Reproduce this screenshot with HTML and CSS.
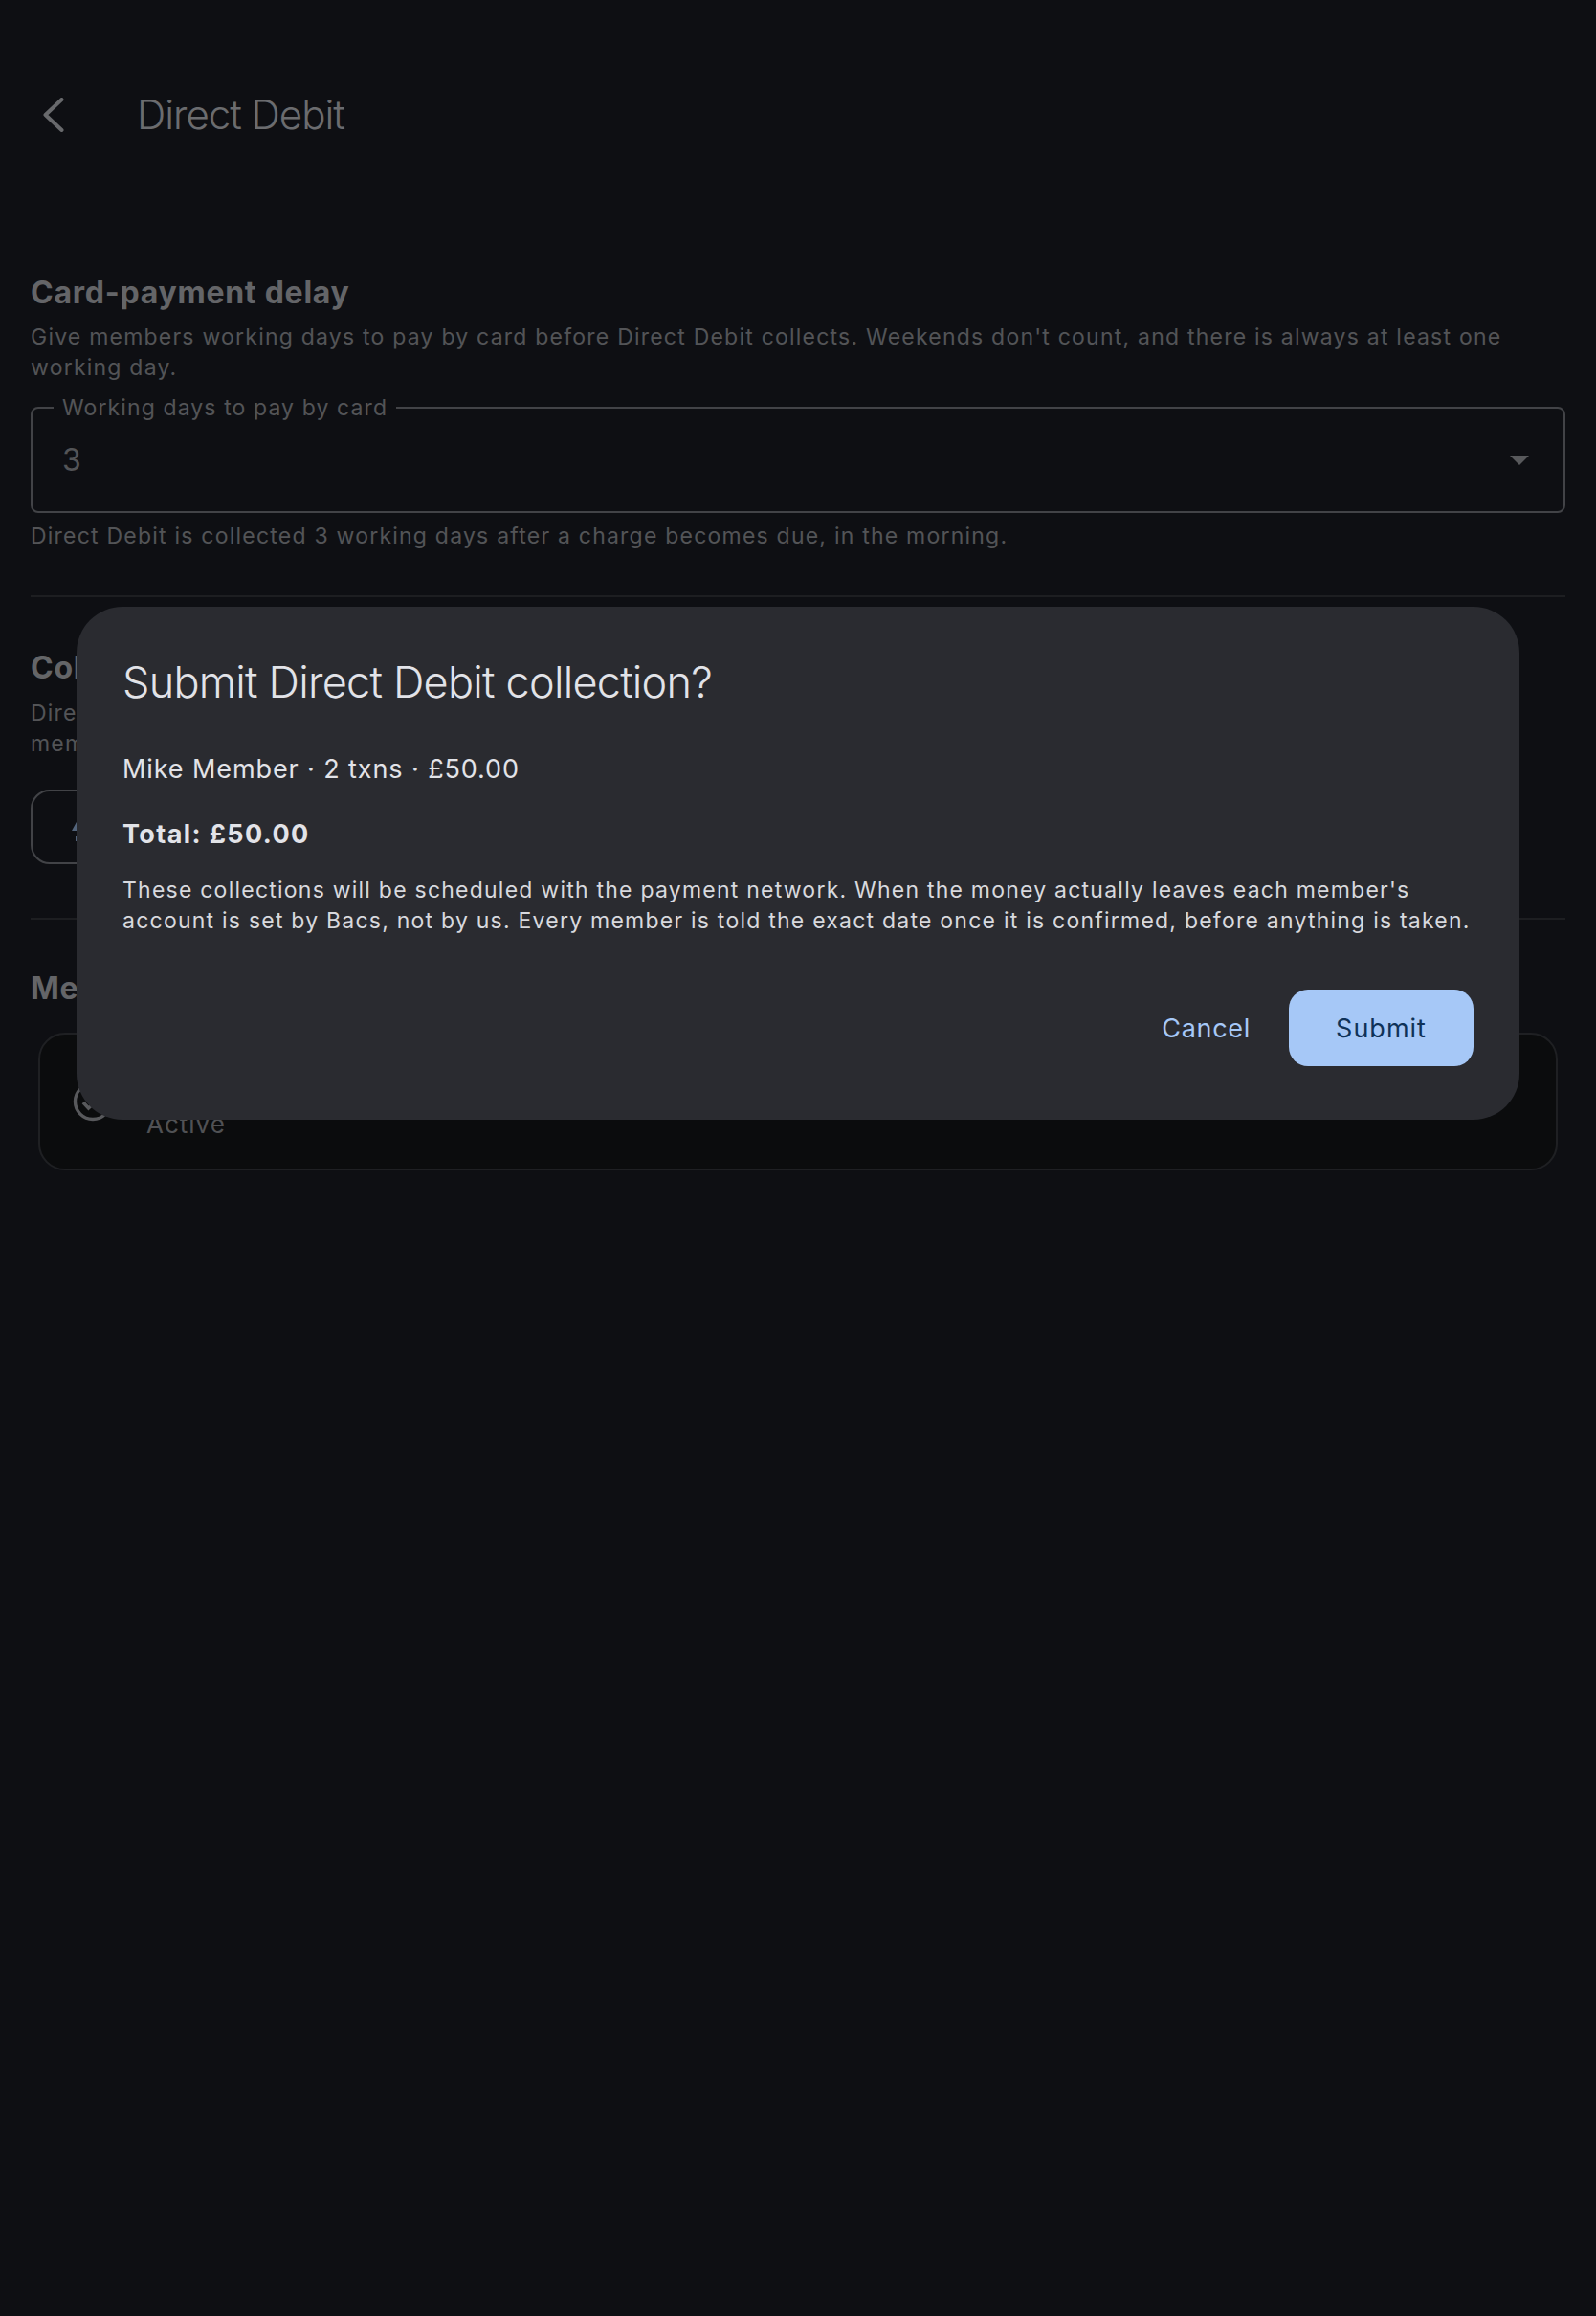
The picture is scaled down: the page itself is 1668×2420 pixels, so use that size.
FILE: index.html
```html
<!DOCTYPE html>
<html lang="en">
<head>
<meta charset="utf-8">
<title>Direct Debit</title>
<link rel="stylesheet" href="styles.css">
</head>
<body>
<div class="page">
  <header class="topbar">
    <button class="back" aria-label="Back">
      <svg viewBox="0 0 48 36" width="48" height="36"><path d="M24.500 2 7.500 18l17 16" fill="none" stroke="currentColor" stroke-width="4" stroke-linecap="round" stroke-linejoin="round"/></svg>
    </button>
    <h1 class="title">Direct Debit</h1>
  </header>
  <main class="content">
    <section class="section first">
      <h2 class="heading">Card-payment delay</h2>
      <p class="desc">Give members working days to pay by card before Direct Debit collects. Weekends don't count, and there is always at least one working day.</p>
      <fieldset class="select">
        <legend>Working days to pay by card</legend>
        <span class="value">3</span>
        <svg class="caret" viewBox="0 0 20 10" width="20" height="10"><path d="M0 0h20L10 10z" fill="currentColor"/></svg>
      </fieldset>
      <p class="help">Direct Debit is collected 3 working days after a charge becomes due, in the morning.</p>
    </section>
    <section class="section middle">
      <h2 class="heading">Collections</h2>
      <p class="desc">Direct Debit collections are submitted to the payment network for each member with money due. Review the<br>members listed below before you submit them.</p>
      <button class="outline">
        <svg class="upload" viewBox="0 0 24 36" width="24" height="36"><path d="M1 22 12 2l11 20zM5 28h14v5H5z" fill="currentColor"/></svg>
        <span>Submit</span>
      </button>
    </section>
    <section class="section last">
      <h2 class="heading">Members</h2>
      <div class="card">
        <svg class="check" viewBox="0 0 48 48" width="48" height="48"><circle cx="24" cy="24" r="18.500" fill="none" stroke="currentColor" stroke-width="3.400"/><path d="m14 25 5.500 6L34 17" fill="none" stroke="currentColor" stroke-width="3.600"/></svg>
        <div class="card-text">
          <div class="card-name">Mike Member</div>
          <div class="card-status">Active</div>
        </div>
      </div>
    </section>
  </main>
</div>
<div class="scrim"></div>
<div class="dialog" role="dialog">
  <h2 class="dialog-title">Submit Direct Debit collection?</h2>
  <p class="dialog-line">Mike Member · 2 txns · £50.00</p>
  <p class="dialog-total">Total: £50.00</p>
  <p class="dialog-note">These collections will be scheduled with the payment network. When the money actually leaves each member's account is set by Bacs, not by us. Every member is told the exact date once it is confirmed, before anything is taken.</p>
  <div class="actions">
    <button class="text-btn">Cancel</button>
    <button class="fill-btn">Submit</button>
  </div>
</div>
</body>
</html>
```

FILE: styles.css
```css
* { box-sizing: border-box; }
html, body { margin: 0; padding: 0; }
body {
  width: 1668px;
  height: 2420px;
  background: #1c1f27;
  color: #e2e3e8;
  font-family: Inter, "Liberation Sans", sans-serif;
  overflow: hidden;
}
button { font-family: inherit; }
.page { padding: 0 32px; }
.topbar {
  height: 240px;
  padding-top: 90px;
  display: flex;
  align-items: flex-start;
}
.back {
  width: 48px;
  height: 60px;
  margin-left: 8px;
  padding: 0;
  border: 0;
  background: none;
  color: #d0d2d8;
  display: flex;
  align-items: center;
}
.title {
  margin: 0 0 0 55px;
  font-size: 42px;
  line-height: 60px;
  font-weight: 300;
  letter-spacing: -1px;
  color: #d6d8de;
}
.section { border-top: 2px solid #3a3c42; padding: 53.500px 0 56px; }
.section.first { border-top: 0; padding-top: 45.500px; padding-bottom: 46px; }
.section.last { padding-top: 52px; padding-bottom: 0; }
.heading {
  margin: 0;
  font-size: 32px;
  line-height: 40px;
  font-weight: 700;
  letter-spacing: 0.75px;
  color: #c8cad0;
}
.desc, .help {
  margin: 0;
  font-size: 23px;
  line-height: 32px;
  letter-spacing: 1.220px;
  color: #a6a8ae;
}
.desc { margin-top: 10.500px; }
.middle .desc { margin-top: 11.500px; }
.select {
  margin: 14px 0 0;
  padding: 0 30px;
  height: 122px;
  border: 2px solid #85878e;
  border-radius: 8px;
  display: flex;
  align-items: center;
  justify-content: space-between;
}
.select legend {
  padding: 0 9px;
  margin-left: -8px;
  font-size: 23px;
  line-height: 24px;
  letter-spacing: 1.100px;
  color: #a6a8ae;
}
.value { font-size: 32px; color: #a6a8ae; margin-top: -11px; margin-left: 1px; }
.caret { color: #b0b2b8; margin-top: -10px; margin-right: 6px; }
.help { margin-top: 8px; }
.outline {
  display: flex;
  align-items: center;
  gap: 12px;
  margin-top: 32px;
  width: 500px;
  height: 78px;
  border: 2px solid #85878e;
  border-radius: 20px;
  background: none;
  padding: 0 0 0 40px;
  font-size: 27px;
  color: #a6c8f7;
}
.upload { flex: none; }
.card {
  margin: 26px 8px 0;
  height: 144px;
  border: 2px solid #3e4046;
  border-radius: 28px;
  background: #16181b;
  display: flex;
  align-items: center;
  padding: 0 31px;
  gap: 32px;
}
.check { color: #b0b2b8; flex: none; }
.card-name { font-size: 28px; line-height: 40px; color: #d0d2d8; }
.card-status { font-size: 26px; line-height: 36px; letter-spacing: 1px; color: #a0a2a8; margin-top: 8px; }
.scrim {
  position: fixed;
  inset: 0;
  background: rgba(0, 0, 0, 0.5);
}
.dialog {
  position: fixed;
  left: 80px;
  top: 634px;
  width: 1508px;
  padding: 48px 48px 56px;
  border-radius: 48px;
  background: #2a2b30;
  color: #e2e3e8;
}
.dialog-title {
  margin: 0;
  font-size: 45px;
  line-height: 62px;
  font-weight: 300;
  letter-spacing: -0.750px;
}
.dialog-line {
  margin: 42px 0 0;
  font-size: 27px;
  line-height: 36px;
  letter-spacing: 0.900px;
}
.dialog-total {
  margin: 32px 0 0;
  font-size: 27px;
  line-height: 36px;
  font-weight: 700;
  letter-spacing: 1.400px;
}
.dialog-note {
  margin: 24px 0 0;
  font-size: 23px;
  line-height: 32px;
  letter-spacing: 1.230px;
  color: #d8d9de;
}
.actions {
  display: flex;
  justify-content: flex-end;
  align-items: center;
  gap: 16px;
  margin-top: 56px;
}
.text-btn, .fill-btn {
  height: 80px;
  border: 0;
  border-radius: 20px;
  font-size: 27px;
  letter-spacing: 0.900px;
}
.text-btn { background: none; color: #a6c8f7; padding: 0 24px; letter-spacing: 0.700px; }
.fill-btn { background: #a6c8f7; color: #0f3258; width: 193px; letter-spacing: 1px; }
```
